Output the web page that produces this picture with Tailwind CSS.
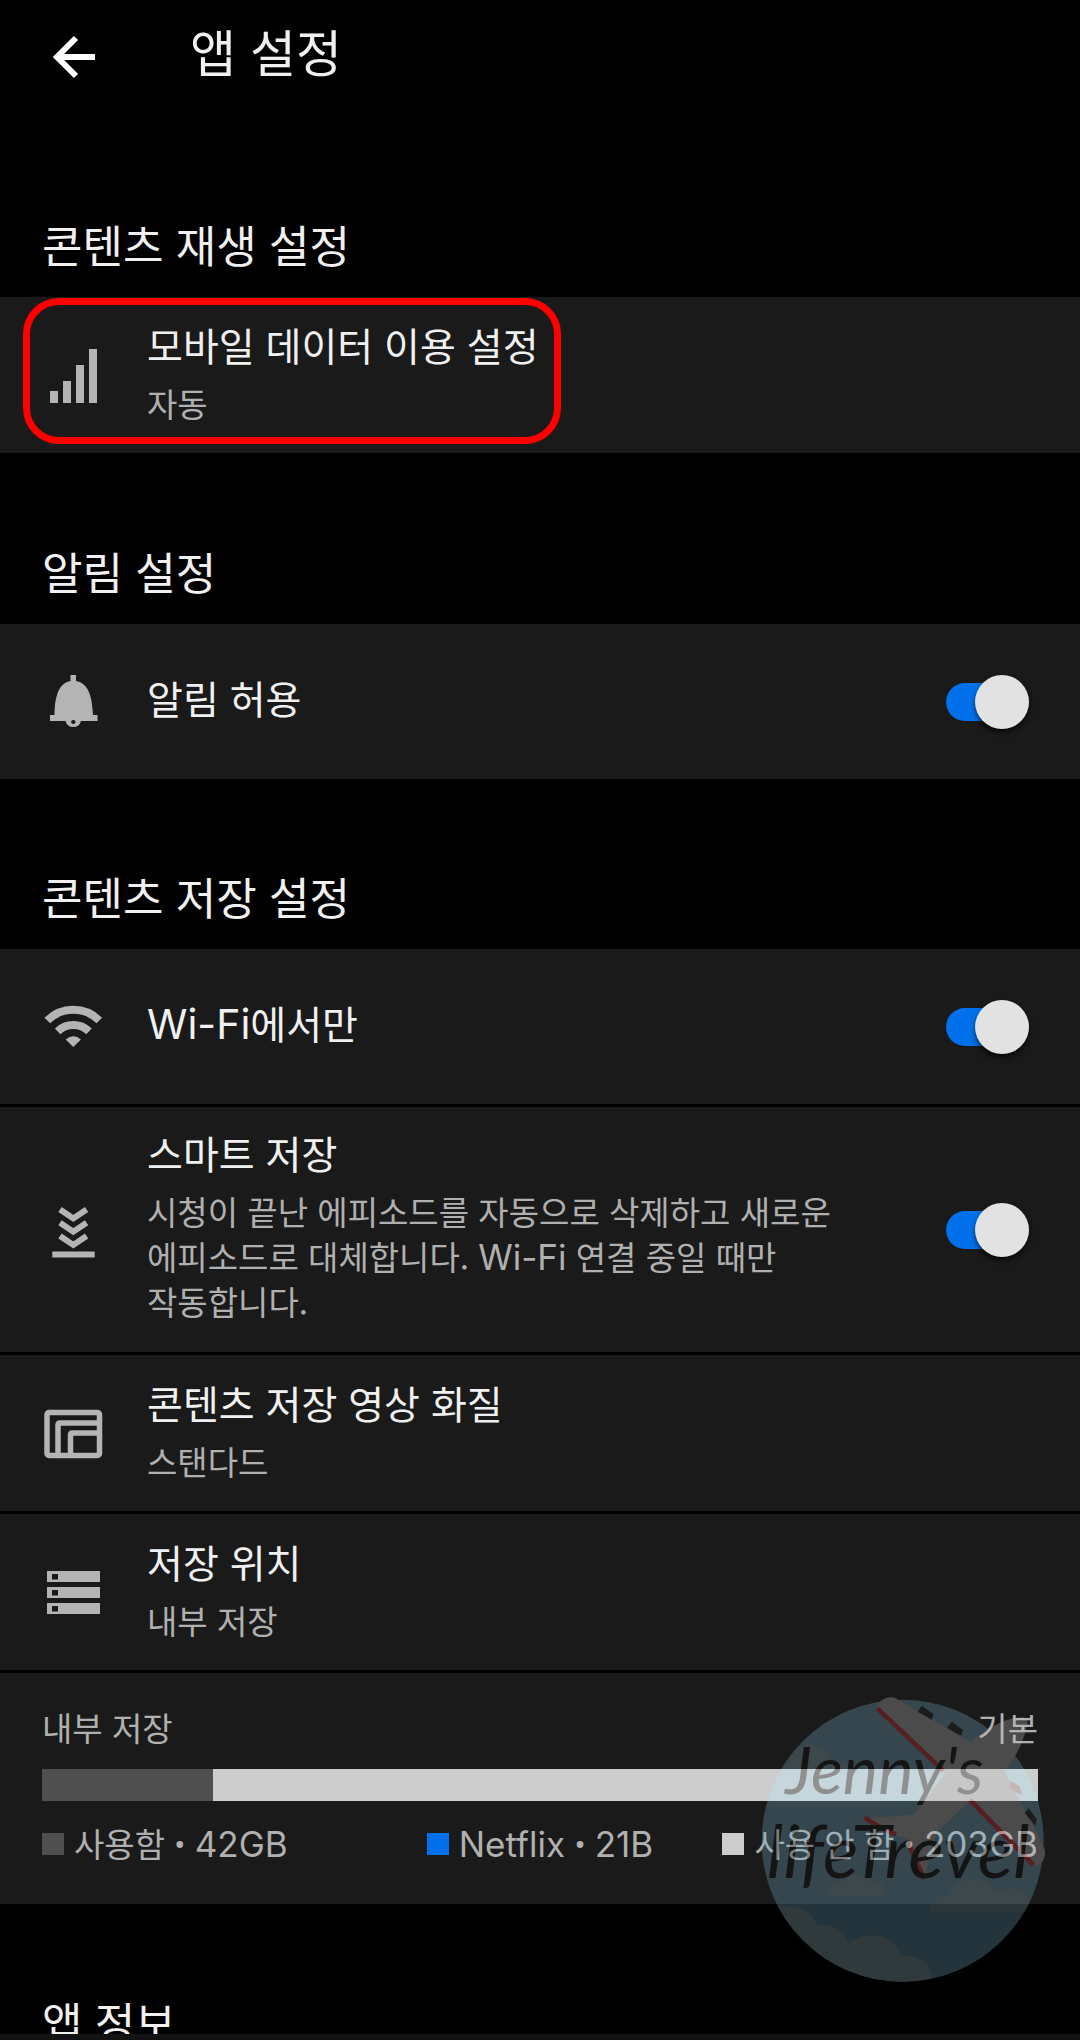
<!DOCTYPE html>
<html lang="ko">
  <head>
    <meta charset="UTF-8" />
    <meta name="viewport" content="width=device-width, initial-scale=1.0" />
    <title>앱 설정</title>
    <script src="https://cdn.jsdelivr.net/npm/@tailwindcss/browser@4"></script>
  </head>
  <body class="bg-black">
    <div class="flex h-screen flex-col overflow-hidden bg-black font-['Noto_Sans_CJK_KR',sans-serif] text-[#f0f0f0]">
      <main class="min-h-0 flex-1 overflow-hidden">
        <header class="flex h-[126px] items-start gap-[86px] px-[42px] pt-5">
          <button type="button" aria-label="뒤로" class="mt-1.5 shrink-0">
            <svg class="size-[62px]" viewBox="0 0 62 62" fill="none" stroke="#fff" stroke-width="6">
              <path d="M34 12 15 31l19 19M14 31h39" />
            </svg>
          </button>
          <h1 class="text-[50px] leading-[60px]">앱 설정</h1>
        </header>

        <section>
          <h2 class="px-[42px] pt-[86px] pb-[21px] text-[44px] leading-[64px]">콘텐츠 재생 설정</h2>
          <button type="button" class="relative flex min-h-[156px] w-full items-center gap-[43px] bg-[#1a1a1a] px-[42px] py-[18px] text-left">
            <svg class="size-[62px] shrink-0" viewBox="0 0 62 62" fill="#b4b4b4">
              <path d="M8 47h8v12H8zM21 37h8v22h-8zM34 21h8v38h-8zM47 5h8v54h-8z" />
            </svg>
            <span class="flex flex-col gap-2.5 pb-2">
              <span class="text-[39px] leading-[54px]">모바일 데이터 이용 설정</span>
              <span class="text-[33px] leading-[45px] text-[#b0b0b0]">자동</span>
            </span>
            <!-- highlight around the mobile data setting -->
            <span class="absolute top-px left-[23px] h-[146px] w-[538px] rounded-[36px] border-[7px] border-[#ff0000]"></span>
          </button>
        </section>

        <section>
          <h2 class="px-[42px] pt-[86px] pb-[21px] text-[44px] leading-[64px]">알림 설정</h2>
          <label class="flex min-h-[155px] items-center gap-[43px] bg-[#1a1a1a] px-[42px] py-[18px]">
            <svg class="size-[62px] shrink-0" viewBox="0 0 62 62" fill="#b4b4b4">
              <path fill-rule="evenodd" d="M28.500 4h5.500v6C44 12 50 20 51 44h4.500v6H39a8 8 0 0 1-15.500 0H8v-6h4.500C13 20 19 12 28.500 10zM31.300 49a2.200 2 0 1 0 .01 0z" />
            </svg>
            <span class="flex-1 pb-2.5 text-[39px] leading-[54px]">알림 허용</span>
            <input type="checkbox" role="switch" checked class="relative mr-[9px] h-[38px] w-[83px] shrink-0 appearance-none rounded-full bg-[#555] before:absolute before:-top-2 before:left-0 before:size-[54px] before:rounded-full before:bg-[#e2e2e2] before:shadow-md before:shadow-black/60 checked:bg-[#0071eb] checked:before:right-0 checked:before:left-auto" />
          </label>
        </section>

        <section>
          <h2 class="px-[42px] pt-[85px] pb-[21px] text-[44px] leading-[64px]">콘텐츠 저장 설정</h2>
          <div class="flex flex-col gap-[3px]">
            <label class="flex min-h-[155px] items-center gap-[43px] bg-[#1a1a1a] px-[42px] py-[18px]">
              <svg class="size-[62px] shrink-0" viewBox="0 0 62 62" fill="none" stroke="#b4b4b4" stroke-width="8">
                <path d="M5.300 24.500a37 37 0 0 1 52 0M15.600 35.300a22.700 22.700 0 0 1 31.400 0" />
                <path fill="#b4b4b4" stroke="none" d="M23.700 43.500q7.600-6.500 15.200 0L31.300 51z" />
              </svg>
              <span class="flex-1 pb-2.5 text-[39px] leading-[54px]"><span class="font-['Inter',sans-serif] text-[41px] leading-none">Wi-Fi</span>에서만</span>
              <input type="checkbox" role="switch" checked class="relative mr-[9px] h-[38px] w-[83px] shrink-0 appearance-none rounded-full bg-[#555] before:absolute before:-top-2 before:left-0 before:size-[54px] before:rounded-full before:bg-[#e2e2e2] before:shadow-md before:shadow-black/60 checked:bg-[#0071eb] checked:before:right-0 checked:before:left-auto" />
            </label>

            <label class="flex items-center gap-[43px] bg-[#1a1a1a] px-[42px] py-[18px]">
              <svg class="size-[62px] shrink-0" viewBox="0 0 62 62" fill="none" stroke="#b4b4b4" stroke-width="6">
                <path d="m18 10.500 13.300 9 13.300-9M18 23.700l13.300 9 13.300-9M18 37l13.300 9 13.300-9" />
                <path d="M10.300 55.500h42.400" />
              </svg>
              <span class="flex flex-1 flex-col gap-2.5 pb-2.5">
                <span class="text-[39px] leading-[54px]">스마트 저장</span>
                <span class="max-w-[720px] text-[33px] leading-[45px] break-keep text-[#b0b0b0]">시청이 끝난 에피소드를 자동으로 삭제하고 새로운 에피소드로 대체합니다. <span class="font-['Inter',sans-serif] text-[35px] leading-none">Wi-Fi</span> 연결 중일 때만 작동합니다.</span>
              </span>
              <input type="checkbox" role="switch" checked class="relative mr-[9px] h-[38px] w-[83px] shrink-0 appearance-none rounded-full bg-[#555] before:absolute before:-top-2 before:left-0 before:size-[54px] before:rounded-full before:bg-[#e2e2e2] before:shadow-md before:shadow-black/60 checked:bg-[#0071eb] checked:before:right-0 checked:before:left-auto" />
            </label>

            <button type="button" class="flex min-h-[156px] w-full items-center gap-[43px] bg-[#1a1a1a] px-[42px] py-[18px] text-left">
              <svg class="size-[62px] shrink-0" viewBox="0 0 62 62" fill="none" stroke="#b4b4b4" stroke-width="5.500">
                <rect x="5" y="10.500" width="52.500" height="43" rx="2" />
                <path d="M57 21H18q-2 0-2 2v30M57 31H30.500q-2 0-2 2v20" />
              </svg>
              <span class="flex flex-col gap-2.5 pb-2">
                <span class="text-[39px] leading-[54px]">콘텐츠 저장 영상 화질</span>
                <span class="text-[33px] leading-[45px] text-[#b0b0b0]">스탠다드</span>
              </span>
            </button>

            <button type="button" class="flex min-h-[156px] w-full items-center gap-[43px] bg-[#1a1a1a] px-[42px] py-[18px] text-left">
              <svg class="size-[62px] shrink-0" viewBox="0 0 62 62" fill="#b4b4b4">
                <path fill-rule="evenodd" d="M5 10h53v11H5zm5 3v5.500h6V13zM5 26h53v11H5zm5 3v5.500h6V29zM5 42h53v11H5zm5 3v5.500h6V45z" />
              </svg>
              <span class="flex flex-col gap-2.5 pb-2">
                <span class="text-[39px] leading-[54px]">저장 위치</span>
                <span class="text-[33px] leading-[45px] text-[#b0b0b0]">내부 저장</span>
              </span>
            </button>

            <!-- storage usage -->
            <div class="relative bg-[#1a1a1a] px-[42px] pt-8 pb-9 text-[33px] leading-[45px] text-[#b0b0b0]">
              <div class="flex justify-between pb-[19px]">
                <span>내부 저장</span>
                <span>기본</span>
              </div>
              <div class="flex h-8 bg-[#cdcdcd]">
                <div class="bg-[#4f4f4f]" style="width: 17.2%"></div>
              </div>
              <ul class="grid grid-cols-3 pt-5 pb-0.5 whitespace-nowrap">
                <li class="flex items-center gap-2.5"><span class="size-[22px] bg-[#4f4f4f]"></span><span>사용함 <span class="font-[Roboto,sans-serif] leading-none">•</span> <span class="font-['Inter',sans-serif] text-[35px] leading-none">42GB</span></span></li>
                <li class="flex items-center justify-center gap-2.5"><span class="size-[22px] bg-[#0071eb]"></span><span><span class="font-['Inter',sans-serif] text-[35px] leading-none">Netflix</span> <span class="font-[Roboto,sans-serif] leading-none">•</span> <span class="font-['Inter',sans-serif] text-[35px] leading-none">21B</span></span></li>
                <li class="flex items-center justify-end gap-2.5"><span class="size-[22px] bg-[#cdcdcd]"></span><span>사용 안 함 <span class="font-[Roboto,sans-serif] leading-none">•</span> <span class="font-['Inter',sans-serif] text-[35px] leading-none">203GB</span></span></li>
              </ul>

              <!-- blog badge laid over the lower right corner -->
              <svg class="pointer-events-none absolute top-1.5 right-0 z-10 h-[320px] w-[340px]" viewBox="0 0 1020 960" aria-hidden="true">
                <defs>
                  <clipPath id="sky"><circle cx="488" cy="485" r="423" /></clipPath>
                </defs>
                <g opacity=".3">
                  <circle cx="488" cy="485" r="423" fill="#78adc8" />
                  <g clip-path="url(#sky)">
                    <g fill="#8db2bf">
                      <path d="M90 380c0-60 20-90 50-90 0-60 30-95 75-95 40 0 62 30 65 65 60-20 100 10 105 55 40 5 50 30 40 65z" />
                      <path d="M265 650c0-30 20-45 50-45 10-25 60-30 75 0 40 0 50 20 45 45zM570 700c0-40 30-50 55-50 15-60 110-70 140-10 50-20 90-10 100 20h80v40z" />
                    </g>
                    <path fill="#a0bcc4" d="M40 680h90c50 0 90 20 100 60 45-10 85 15 95 55 50-45 140-30 160 35 45-5 85 25 90 60v60H40z" />
                    <path fill="#b4f0ff" d="M50 270h845v96H50z" />
                  </g>
                  <path fill="#bbb" d="M412 90c0-25 30-42 55-32l225 132c50-45 110-75 155-75 15 0 18 12 14 25-12 50-32 95-68 135l120 232c8 30-8 55-32 53L690 365 590 460 552 600 500 480l-30-12-95-50 145-10 95-125z" />
                  <path fill="none" stroke="#e02f38" stroke-width="14" d="m412 88 198 187M690 363l190 195M374 416q50 32 94 50M502 484l50 116" />
                  <path fill="#222" d="m545 80 36 26-6 16-42-24zM636 128l34 26-8 16-42-24zM866 388l24 32-4 20-32-38z" />
                  <path fill="#b08484" d="m812 305 28 18 6 26-36-20z" />
                  <g fill="#080808" font-family="Lato, sans-serif" font-style="italic">
                    <text x="136" y="345" font-size="200">Jenny's</text>
                    <text x="80" y="598" font-size="222">lifeTrevel</text>
                  </g>
                </g>
              </svg>
            </div>
          </div>
        </section>

        <section>
          <h2 class="px-[42px] pt-[85px] pb-[21px] text-[44px] leading-[64px]">앱 정보</h2>
        </section>
      </main>
      <div class="h-1.5 shrink-0 bg-[#121212]"></div>
    </div>
  </body>
</html>
